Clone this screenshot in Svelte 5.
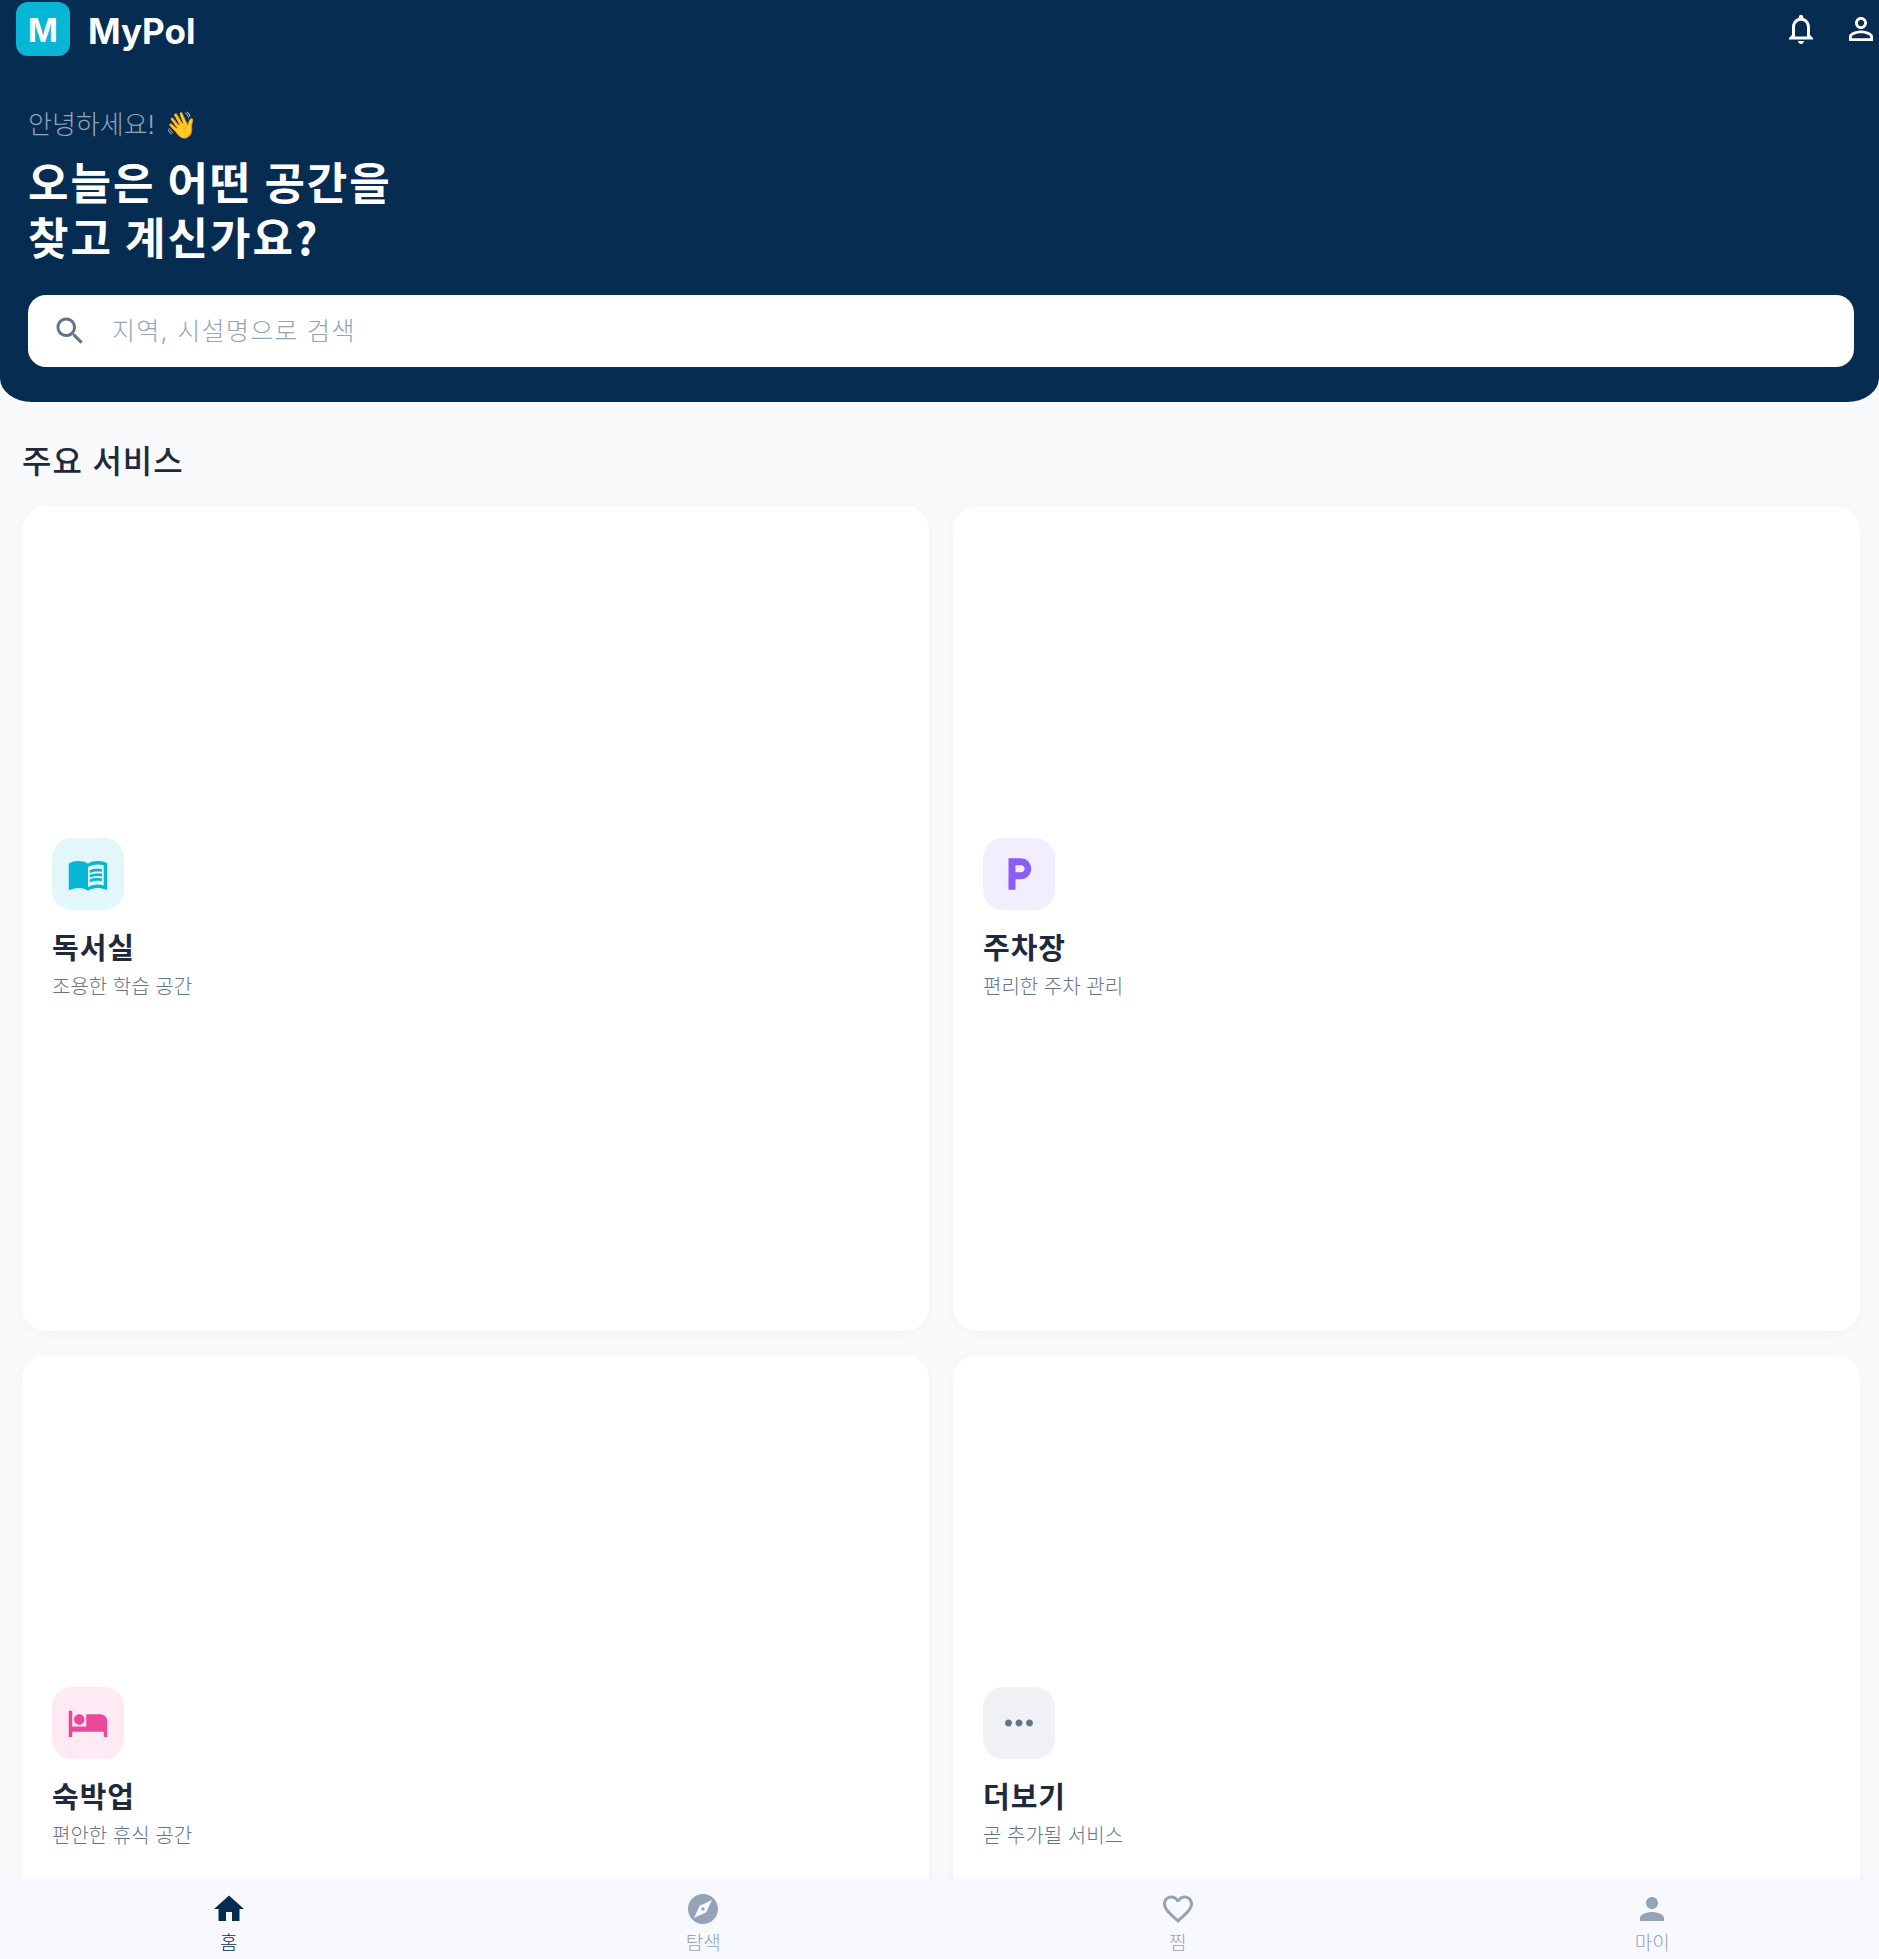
<script lang="ts">
  const services = [
    { title: '독서실', desc: '조용한 학습 공간', tone: 'cyan', icon: 'book' },
    { title: '주차장', desc: '편리한 주차 관리', tone: 'violet', icon: 'parking' },
    { title: '숙박업', desc: '편안한 휴식 공간', tone: 'pink', icon: 'bed' },
    { title: '더보기', desc: '곧 추가될 서비스', tone: 'gray', icon: 'more' },
  ];

  const serviceIcons: Record<string, string> = {
    book: 'M21 5c-1.11-.35-2.33-.5-3.5-.5-1.95 0-4.05.4-5.5 1.5-1.45-1.1-3.55-1.5-5.5-1.5S2.45 4.9 1 6v14.65c0 .25.25.5.5.5.1 0 .15-.05.25-.05C3.1 20.45 5.05 20 6.5 20c1.95 0 4.05.4 5.5 1.5 1.35-.85 3.8-1.5 5.5-1.5 1.65 0 3.35.3 4.75 1.05.1.05.15.05.25.05.25 0 .5-.25.5-.5V6c-.6-.45-1.25-.75-2-1zm0 13.5c-1.1-.35-2.3-.5-3.5-.5-1.7 0-4.15.65-5.5 1.5V8c1.35-.85 3.8-1.5 5.5-1.5 1.2 0 2.4.15 3.5.5v11.5zM17.5 10.5c.88 0 1.73.09 2.5.26V9.24c-.79-.15-1.64-.24-2.5-.24-1.7 0-3.24.29-4.5.83v1.66c1.13-.64 2.7-.99 4.5-.99zM13 12.49v1.66c1.13-.64 2.7-.99 4.5-.99.88 0 1.73.09 2.5.26V11.9c-.79-.15-1.64-.24-2.5-.24-1.7 0-3.24.3-4.5.83zM17.5 14.33c-1.7 0-3.24.29-4.5.83v1.66c1.13-.64 2.7-.99 4.5-.99.88 0 1.73.09 2.5.26v-1.52c-.79-.16-1.64-.24-2.5-.24z',
    parking: 'M13 3H6v18h4v-6h3c3.31 0 6-2.69 6-6s-2.69-6-6-6zm.2 8H10V7h3.2c1.1 0 2 .9 2 2s-.9 2-2 2z',
    bed: 'M7 13c1.66 0 3-1.34 3-3S8.66 7 7 7s-3 1.34-3 3 1.34 3 3 3zm12-6h-8v7H3V5H1v15h2v-3h18v3h2v-9c0-2.21-1.79-4-4-4z',
    more: 'M6 10c-1.1 0-2 .9-2 2s.9 2 2 2 2-.9 2-2-.9-2-2-2zm12 0c-1.1 0-2 .9-2 2s.9 2 2 2 2-.9 2-2-.9-2-2-2zm-6 0c-1.1 0-2 .9-2 2s.9 2 2 2 2-.9 2-2-.9-2-2-2z',
  };

  const tabs = [
    { label: '홈', active: true, d: 'M10 20v-6h4v6h5v-8h3L12 3 2 12h3v8z' },
    { label: '탐색', active: false, d: 'M12 10.9c-.61 0-1.1.49-1.1 1.1s.49 1.1 1.1 1.1c.61 0 1.1-.49 1.1-1.1s-.49-1.1-1.1-1.1zM12 2C6.48 2 2 6.48 2 12s4.48 10 10 10 10-4.48 10-10S17.52 2 12 2zm2.19 12.19L6 18l3.81-8.19L18 6l-3.81 8.19z' },
    { label: '찜', active: false, d: 'M16.5 3c-1.74 0-3.41.81-4.5 2.09C10.91 3.81 9.24 3 7.5 3 4.42 3 2 5.42 2 8.5c0 3.78 3.4 6.86 8.55 11.54L12 21.35l1.45-1.32C18.6 15.36 22 12.28 22 8.5 22 5.42 19.58 3 16.5 3zm-4.4 15.55l-.1.1-.1-.1C7.14 14.24 4 11.39 4 8.5 4 6.5 5.5 5 7.5 5c1.54 0 3.04.99 3.57 2.36h1.87C13.46 5.99 14.96 5 16.5 5c2 0 3.5 1.5 3.5 3.5 0 2.89-3.14 5.74-7.9 10.05z' },
    { label: '마이', active: false, d: 'M12 12c2.21 0 4-1.79 4-4s-1.79-4-4-4-4 1.79-4 4 1.79 4 4 4zm0 2c-2.67 0-8 1.34-8 4v2h16v-2c0-2.66-5.33-4-8-4z' },
  ];
</script>

<div class="page">
  <header class="hero">
    <div class="topbar">
      <div class="logo">M</div>
      <span class="brand">MyPol</span>
      <div class="actions">
        <svg viewBox="0 0 24 24" width="36" height="36" fill="currentColor"><path d="M12 22c1.1 0 2-.9 2-2h-4c0 1.1.89 2 2 2zm6-6v-5c0-3.07-1.64-5.64-4.5-6.32V4c0-.83-.67-1.5-1.5-1.5s-1.5.67-1.5 1.5v.68C7.63 5.36 6 7.92 6 11v5l-2 2v1h16v-1l-2-2zm-2 1H8v-6c0-2.48 1.51-4.5 4-4.5s4 2.02 4 4.5v6z"/></svg>
        <svg viewBox="0 0 24 24" width="36" height="36" fill="currentColor"><path d="M12 5.9c1.16 0 2.1.94 2.1 2.1s-.94 2.1-2.1 2.1S9.9 9.16 9.9 8s.94-2.1 2.1-2.1m0 9c2.97 0 6.1 1.46 6.1 2.1v1.1H5.9V17c0-.64 3.13-2.1 6.1-2.1M12 4C9.79 4 8 5.79 8 8s1.79 4 4 4 4-1.79 4-4-1.79-4-4-4zm0 9c-2.67 0-8 1.34-8 4v3h16v-3c0-2.66-5.33-4-8-4z"/></svg>
      </div>
    </div>
    <p class="greeting">안녕하세요! 👋</p>
    <h1>오늘은 어떤 공간을<br />찾고 계신가요?</h1>
    <label class="search">
      <svg viewBox="0 0 24 24" width="36" height="36" fill="currentColor"><path d="M15.5 14h-.79l-.28-.27C15.41 12.59 16 11.11 16 9.5 16 5.91 13.09 3 9.5 3S3 5.91 3 9.5 5.91 16 9.5 16c1.61 0 3.09-.59 4.23-1.57l.27.28v.79l5 4.99L20.49 19l-4.99-5zm-6 0C7.01 14 5 11.99 5 9.5S7.01 5 9.5 5 14 7.01 14 9.5 11.99 14 9.5 14z"/></svg>
      <input type="text" placeholder="지역, 시설명으로 검색" />
    </label>
  </header>

  <main>
    <h2>주요 서비스</h2>
    <div class="grid">
      {#each services as s (s.title)}
        <article class="card">
          <div class="badge {s.tone}">
            <svg viewBox="0 0 24 24" width="42" height="42" fill="currentColor"><path d={serviceIcons[s.icon]} /></svg>
          </div>
          <h3>{s.title}</h3>
          <p>{s.desc}</p>
        </article>
      {/each}
    </div>
  </main>

  <nav>
    {#each tabs as t (t.label)}
      <div class="tab" class:active={t.active}>
        <svg viewBox="0 0 24 24" width="36" height="36" fill="currentColor"><path d={t.d} /></svg>
        <span>{t.label}</span>
      </div>
    {/each}
  </nav>
</div>

<style>
  :global(body) {
    background: #f8fafc;
  }
  .page {
    height: 1959px;
    overflow: hidden;
    display: flex;
    flex-direction: column;
    font-family: Inter, "Noto Sans CJK KR", "Noto Sans", sans-serif;
  }
  .hero {
    background: #072c51;
    color: #fff;
    height: 402px;
    box-sizing: border-box;
    flex: none;
    border-radius: 0 0 32px 32px / 0 0 24px 24px;
  }
  .topbar {
    display: flex;
    align-items: center;
    height: 58px;
    padding-left: 16px;
  }
  .logo {
    width: 54px;
    height: 54px;
    box-sizing: border-box;
    padding-top: 3px;
    border-radius: 12px;
    background: #06b6d4;
    display: flex;
    align-items: center;
    justify-content: center;
    font-size: 32px;
    font-weight: 700;
  }
  .brand {
    margin: 4px 0 0 18px;
    font-size: 35px;
    font-weight: 700;
    line-height: 1;
  }
  .actions {
    margin-left: auto;
    display: flex;
    gap: 24px;
  }
  .greeting {
    margin: 49px 0 0 28px;
    font-size: 26px;
    line-height: 36px;
    font-weight: 300;
    word-spacing: 3px;
    color: #94a3b8;
  }
  h1 {
    margin: 11px 0 0 28px;
    font-family: "Noto Sans CJK KR", sans-serif;
    font-size: 44px;
    line-height: 55px;
    font-weight: 700;
    letter-spacing: 2px;
  }
  .search {
    display: flex;
    align-items: center;
    gap: 22px;
    margin: 31px 25px 0 28px;
    height: 72px;
    padding-left: 24px;
    background: #fff;
    border-radius: 18px;
    color: #64748b;
  }
  .search input {
    flex: 1;
    border: 0;
    outline: 0;
    background: transparent;
    font: inherit;
    font-size: 25px;
    font-weight: 300;
    letter-spacing: 1.3px;
  }
  .search input::placeholder {
    color: #94a3b8;
    opacity: 1;
  }
  main {
    flex: 1;
    min-height: 0;
    overflow: hidden;
    padding: 0 19px 0 22px;
  }
  h2 {
    margin: 38px 0 0;
    font-size: 32px;
    line-height: 43px;
    font-weight: 500;
    color: #1e293b;
    letter-spacing: 1px;
  }
  .grid {
    margin-top: 23px;
    display: grid;
    grid-template-columns: 1fr 1fr;
    grid-auto-rows: 825px;
    gap: 24px;
  }
  .card {
    background: #fff;
    border-radius: 24px;
    padding: 1px 30px 0;
    display: flex;
    flex-direction: column;
    justify-content: center;
    box-shadow: 0 2px 12px rgba(15, 23, 42, 0.04);
  }
  .badge {
    width: 72px;
    height: 72px;
    border-radius: 20px;
    display: flex;
    align-items: center;
    justify-content: center;
  }
  .cyan { background: #e3f7fb; color: #06b6d4; }
  .violet { background: #f3eefe; color: #8b5cf6; }
  .pink { background: #fdeaf4; color: #ec4899; }
  .gray { background: #eff1f4; color: #64748b; }
  h3 {
    margin: 19px 0 0;
    font-size: 29px;
    line-height: 40px;
    font-weight: 600;
    color: #1e293b;
    letter-spacing: 1px;
  }
  .card p {
    margin: 4px 0 0;
    font-size: 20px;
    line-height: 28px;
    font-weight: 300;
    color: #64748b;
  }
  nav {
    flex: none;
    height: 80px;
    background: #f8f9fe;
    display: grid;
    grid-template-columns: repeat(4, 474.5px);
    justify-content: center;
    position: relative;
    padding-left: 2px;
    box-sizing: border-box;
    box-shadow: 0 -2px 8px rgba(15, 23, 42, 0.02);
  }
  .tab {
    display: flex;
    flex-direction: column;
    align-items: center;
    padding-top: 12px;
    color: #94a3b8;
  }
  .tab span {
    font-size: 19px;
    line-height: 24px;
    margin-top: 5px;
    font-weight: 300;
  }
  .tab.active {
    color: #072c51;
  }
</style>
